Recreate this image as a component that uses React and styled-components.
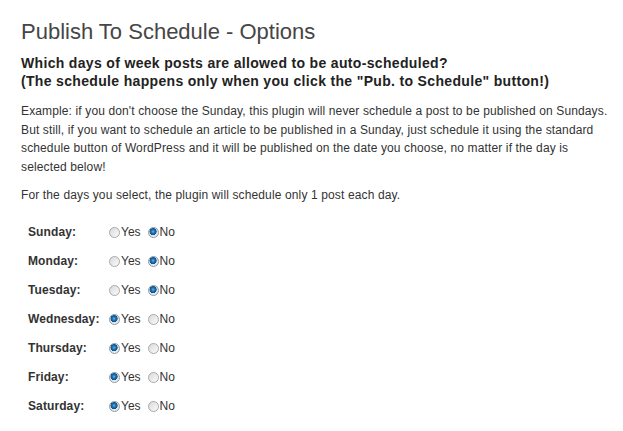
import React from 'react'
import styled, { createGlobalStyle } from 'styled-components'

const GlobalStyle = createGlobalStyle`
    html, body {
        margin: 0;
        padding: 0;
        background: #fff;
    }
    body {
        font-family: "Liberation Sans", Arial, sans-serif;
        color: #333;
    }
`

const Wrap = styled.div`
    padding: 17px 10px 0 21px;
`
const Title = styled.h2`
    margin: 0;
    font-size: 22px;
    font-weight: 400;
    line-height: 29px;
    color: #464646;
`
const Question = styled.h3`
    margin: 8px 0 0;
    font-size: 14px;
    font-weight: 700;
    line-height: 18px;
    letter-spacing: 0.33px;
    color: #222;
`
const Text = styled.p`
    margin: ${p => p.$top || 0}px 0 0;
    font-size: 12px;
    line-height: 18.5px;
    letter-spacing: 0.13px;
    color: #333;
`
const Table = styled.div`
    display: grid;
    grid-template-columns: 81px auto;
    grid-auto-rows: 29px;
    margin-top: 13px;
    padding-left: 7px;
    align-items: center;
`
const Label = styled.div`
    font-size: 12px;
    font-weight: 700;
    letter-spacing: 0.1px;
    color: #333;
`
const Choices = styled.div`
    display: flex;
    align-items: center;
    font-size: 12px;
    color: #333;
`
const Option = styled.label`
    display: flex;
    align-items: center;
    gap: 1px;
    margin-right: 7px;
`
const Radio = styled.span`
    display: inline-block;
    width: 11px;
    height: 11px;
    border-radius: 50%;
    box-sizing: border-box;
    border: 1px solid ${p => (p.$on ? '#8a9aa6' : '#a9a9a9')};
    background: ${p =>
        p.$on
            ? 'radial-gradient(circle at 45% 40%, #6fb8e8 0, #1f76b8 1.6px, #124f86 3.3px, #dfe6ea 3.8px, #f2f4f6 100%)'
            : 'linear-gradient(135deg, #d9d9d9 0%, #eeeeee 60%, #fafafa 100%)'};
`

const days = [
    ['Sunday', false],
    ['Monday', false],
    ['Tuesday', false],
    ['Wednesday', true],
    ['Thursday', true],
    ['Friday', true],
    ['Saturday', true],
]

const App = () => {
    return (
        <>
            <GlobalStyle />
            <Wrap>
                <Title>Publish To Schedule - Options</Title>
                <Question>
                    Which days of week posts are allowed to be auto-scheduled?
                    <br />
                    (The schedule happens only when you click the "Pub. to Schedule" button!)
                </Question>
                <Text $top={12}>
                    Example: if you don't choose the Sunday, this plugin will never schedule a post to be published on Sundays.
                    <br />
                    But still, if you want to schedule an article to be published in a Sunday, just schedule it using the standard
                    <br />
                    schedule button of WordPress and it will be published on the date you choose, no matter if the day is
                    <br />
                    selected below!
                </Text>
                <Text $top={10}>For the days you select, the plugin will schedule only 1 post each day.</Text>
                <Table>
                    {days.map(([day, yes]) => (
                        <React.Fragment key={day}>
                            <Label>{day}:</Label>
                            <Choices>
                                <Option>
                                    <Radio $on={yes} />
                                    Yes
                                </Option>
                                <Option>
                                    <Radio $on={!yes} />
                                    No
                                </Option>
                            </Choices>
                        </React.Fragment>
                    ))}
                </Table>
            </Wrap>
        </>
    )
}

export default App
